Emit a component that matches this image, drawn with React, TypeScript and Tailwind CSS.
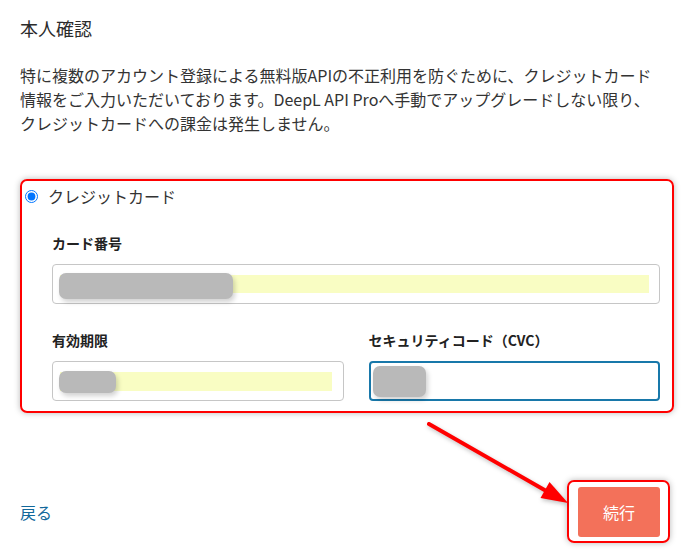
import React from 'react';

const jp = "font-['Noto_Sans_CJK_JP','Noto_Sans',sans-serif]";

const Blob = ({ className }: { className: string }) => (
  <div className={`absolute rounded-[7px] bg-[#b9b9b9] shadow-[2px_3px_5px_rgba(0,0,0,0.18)] ${className}`} />
);

const App = () => {
  return (
    <div className={`relative w-[688px] h-[550px] bg-white pl-[20px] pr-[14px] pt-[14px] text-[#2b2b2b] ${jp}`}>
      <h2 className="text-[18px] leading-[28px] font-normal">本人確認</h2>
      <p className="mt-[21px] text-[16px] leading-[24px] text-[#333]">
        特に複数のアカウント登録による無料版APIの不正利用を防ぐために、クレジットカード
        <br />
        情報をご入力いただいております。DeepL API Proへ手動でアップグレードしない限り、
        <br />
        クレジットカードへの課金は発生しません。
      </p>

      {/* Payment method box */}
      <div className="mt-[44px] rounded-[7px] border-2 border-[#ff0000] shadow-[0_0_6px_rgba(0,0,0,0.28)] pt-[3px] pb-[10px] pr-[12px]">
        <label className="flex items-center h-[24px] pl-[3px] gap-[10px]">
          <input type="radio" defaultChecked className="w-[13px] h-[13px] m-0 accent-[#0075ff]" />
          <span className="text-[16px] leading-[24px] text-[#333]">クレジットカード</span>
        </label>

        <div className="pl-[30px]">
          <div className="mt-[25px] text-[14px] leading-[20px] font-bold text-[#222]">カード番号</div>
          <div className="relative mt-[11px] h-[40px] rounded-[4px] border border-[#c6c6c6]">
            <div className="absolute left-[7px] top-[10px] w-[589px] h-[18px] bg-[#f9fdc3]" />
            <Blob className="left-[6px] top-[8px] w-[174px] h-[26px]" />
          </div>

          <div className="mt-[26px] grid grid-cols-2 gap-[25px]">
            <div>
              <div className="text-[14px] leading-[20px] font-bold text-[#222]">有効期限</div>
              <div className="relative mt-[11px] h-[40px] rounded-[4px] border border-[#c6c6c6]">
                <div className="absolute left-[7px] top-[10px] w-[272px] h-[19px] bg-[#f9fdc3]" />
                <Blob className="left-[6px] top-[9px] w-[57px] h-[22px]" />
              </div>
            </div>
            <div>
              <div className="text-[14px] leading-[20px] font-bold text-[#222]">セキュリティコード（CVC）</div>
              <div className="relative mt-[11px] h-[40px] rounded-[4px] border-2 border-[#1878aa]">
                <Blob className="left-[2px] top-[3px] w-[53px] h-[31px]" />
              </div>
            </div>
          </div>
        </div>
      </div>

      {/* Footer actions */}
      <div className="mt-[67px] flex items-center justify-between pr-[4px]">
        <a className="text-[16px] leading-[24px] text-[#12689b] cursor-pointer">戻る</a>
        <div className="rounded-[7px] border-2 border-[#ff0000] shadow-[0_0_6px_rgba(0,0,0,0.28)] pt-[5px] pb-[4px] pl-[9px] pr-[8px]">
          <button className="w-[82px] h-[50px] rounded-[3px] bg-[#f3715a] text-white text-[16px]">続行</button>
        </div>
      </div>

      {/* Annotation arrow */}
      <svg
        className="absolute left-0 top-0 pointer-events-none drop-shadow-[1px_2px_2px_rgba(0,0,0,0.25)]"
        width="688"
        height="550"
      >
        <line x1="429" y1="424" x2="548" y2="492" stroke="#ff0000" strokeWidth="4" strokeLinecap="round" />
        <polygon points="568,503 540.5,498 549.5,482" fill="#ff0000" />
      </svg>
    </div>
  );
};

export default App;
